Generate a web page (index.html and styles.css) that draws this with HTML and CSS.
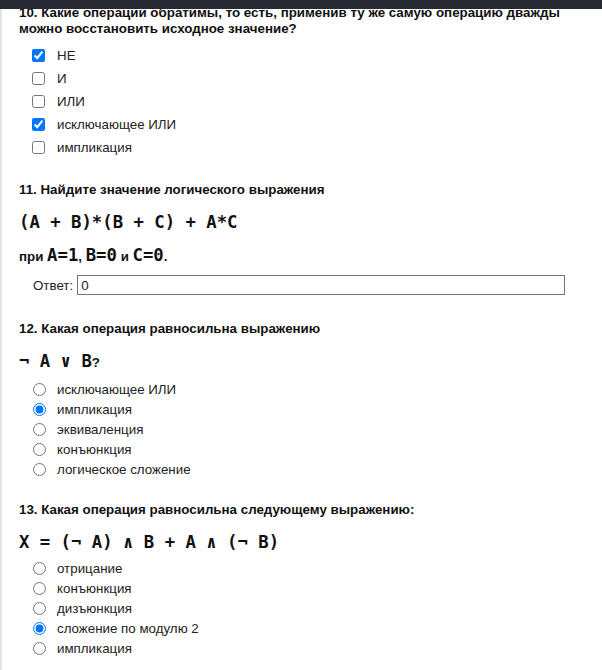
FILE: index.html
```html
<!DOCTYPE html>
<html lang="ru">
<head>
<meta charset="utf-8">
<title>Тест</title>
<link rel="stylesheet" href="styles.css">
</head>
<body>
<div class="topbar"></div>
<main class="page">
  <section class="question">
    <p class="q-title">10. Какие операции обратимы, то есть, применив ту же самую операцию дважды можно восстановить исходное значение?</p>
    <ul class="options checks">
      <li><label><input type="checkbox" checked><span>НЕ</span></label></li>
      <li><label><input type="checkbox"><span>И</span></label></li>
      <li><label><input type="checkbox"><span>ИЛИ</span></label></li>
      <li><label><input type="checkbox" checked><span>исключающее ИЛИ</span></label></li>
      <li><label><input type="checkbox"><span>импликация</span></label></li>
    </ul>
  </section>

  <section class="question">
    <p class="q-title">11. Найдите значение логического выражения</p>
    <p class="expr">(A + B)*(B + C) + A*C</p>
    <p class="cond">при <span class="mono">A=1</span>, <span class="mono">B=0</span> и <span class="mono">C=0</span>.</p>
    <div class="answer">
      <label class="answer-label" for="a11">Ответ:</label>
      <input class="answer-input" id="a11" type="text" value="0">
    </div>
  </section>

  <section class="question">
    <p class="q-title">12. Какая операция равносильна выражению</p>
    <p class="expr">¬ A ∨ B<span class="qmark">?</span></p>
    <ul class="options radios">
      <li><label><input type="radio" name="q12"><span>исключающее ИЛИ</span></label></li>
      <li><label><input type="radio" name="q12" checked><span>импликация</span></label></li>
      <li><label><input type="radio" name="q12"><span>эквиваленция</span></label></li>
      <li><label><input type="radio" name="q12"><span>конъюнкция</span></label></li>
      <li><label><input type="radio" name="q12"><span>логическое сложение</span></label></li>
    </ul>
  </section>

  <section class="question">
    <p class="q-title">13. Какая операция равносильна следующему выражению:</p>
    <p class="expr">X = (¬ A) ∧ B + A ∧ (¬ B)</p>
    <ul class="options radios">
      <li><label><input type="radio" name="q13"><span>отрицание</span></label></li>
      <li><label><input type="radio" name="q13"><span>конъюнкция</span></label></li>
      <li><label><input type="radio" name="q13"><span>дизъюнкция</span></label></li>
      <li><label><input type="radio" name="q13" checked><span>сложение по модулю 2</span></label></li>
      <li><label><input type="radio" name="q13"><span>импликация</span></label></li>
    </ul>
  </section>
</main>
</body>
</html>
```

FILE: styles.css
```css
html, body {
  margin: 0;
  padding: 0;
  background: #fff;
}

body {
  font-family: "Liberation Sans", Arial, sans-serif;
  font-size: 13.33px;
  color: #222;
}

.topbar {
  position: fixed;
  top: 0;
  left: 0;
  right: 0;
  height: 9px;
  background: #262832;
  z-index: 2;
}

.page {
  border-left: 2px solid #e2e4ea;
  padding: 5px 37px 40px 17px;
}

.question + .question {
  margin-top: 23px;
}

.q-title {
  margin: 0;
  font-weight: bold;
  line-height: 16px;
  color: #111;
}

.options {
  list-style: none;
  margin: 7px 0 0;
  padding: 0 0 0 13px;
}

.options li {
  display: flex;
  align-items: center;
  height: 23px;
}

.options label {
  display: flex;
  align-items: center;
  gap: 12px;
  line-height: 15px;
}

.options input {
  margin: 0;
  width: 13px;
  height: 13px;
}

.radios {
  margin-top: 6px;
}

.radios li {
  height: 20px;
}

.radios label {
  gap: 11px;
}

.radios input {
  margin-left: 1px;
}

.expr {
  margin: 14px 0 0;
  font-family: "DejaVu Sans Mono", monospace;
  font-weight: bold;
  font-size: 17.3px;
  line-height: 20px;
  color: #111;
  white-space: pre;
}

.qmark {
  font-family: "Liberation Sans", Arial, sans-serif;
  font-size: 13.33px;
}

.cond {
  margin: 13px 0 0;
  font-weight: bold;
  line-height: 20px;
  color: #111;
}

.mono {
  font-family: "DejaVu Sans Mono", monospace;
  font-size: 17.3px;
}

.answer {
  display: flex;
  align-items: center;
  gap: 4px;
  margin: 8px 0 26px;
  padding-left: 14px;
}

.answer-label {
  color: #222;
}

.answer-input {
  flex: 1;
  box-sizing: border-box;
  height: 20px;
  margin: 0;
  padding: 0 3px;
  border: 1px solid #767676;
  border-radius: 0;
  font-family: "Liberation Sans", Arial, sans-serif;
  font-size: 13.33px;
  color: #222;
  background: #fff;
}
```
